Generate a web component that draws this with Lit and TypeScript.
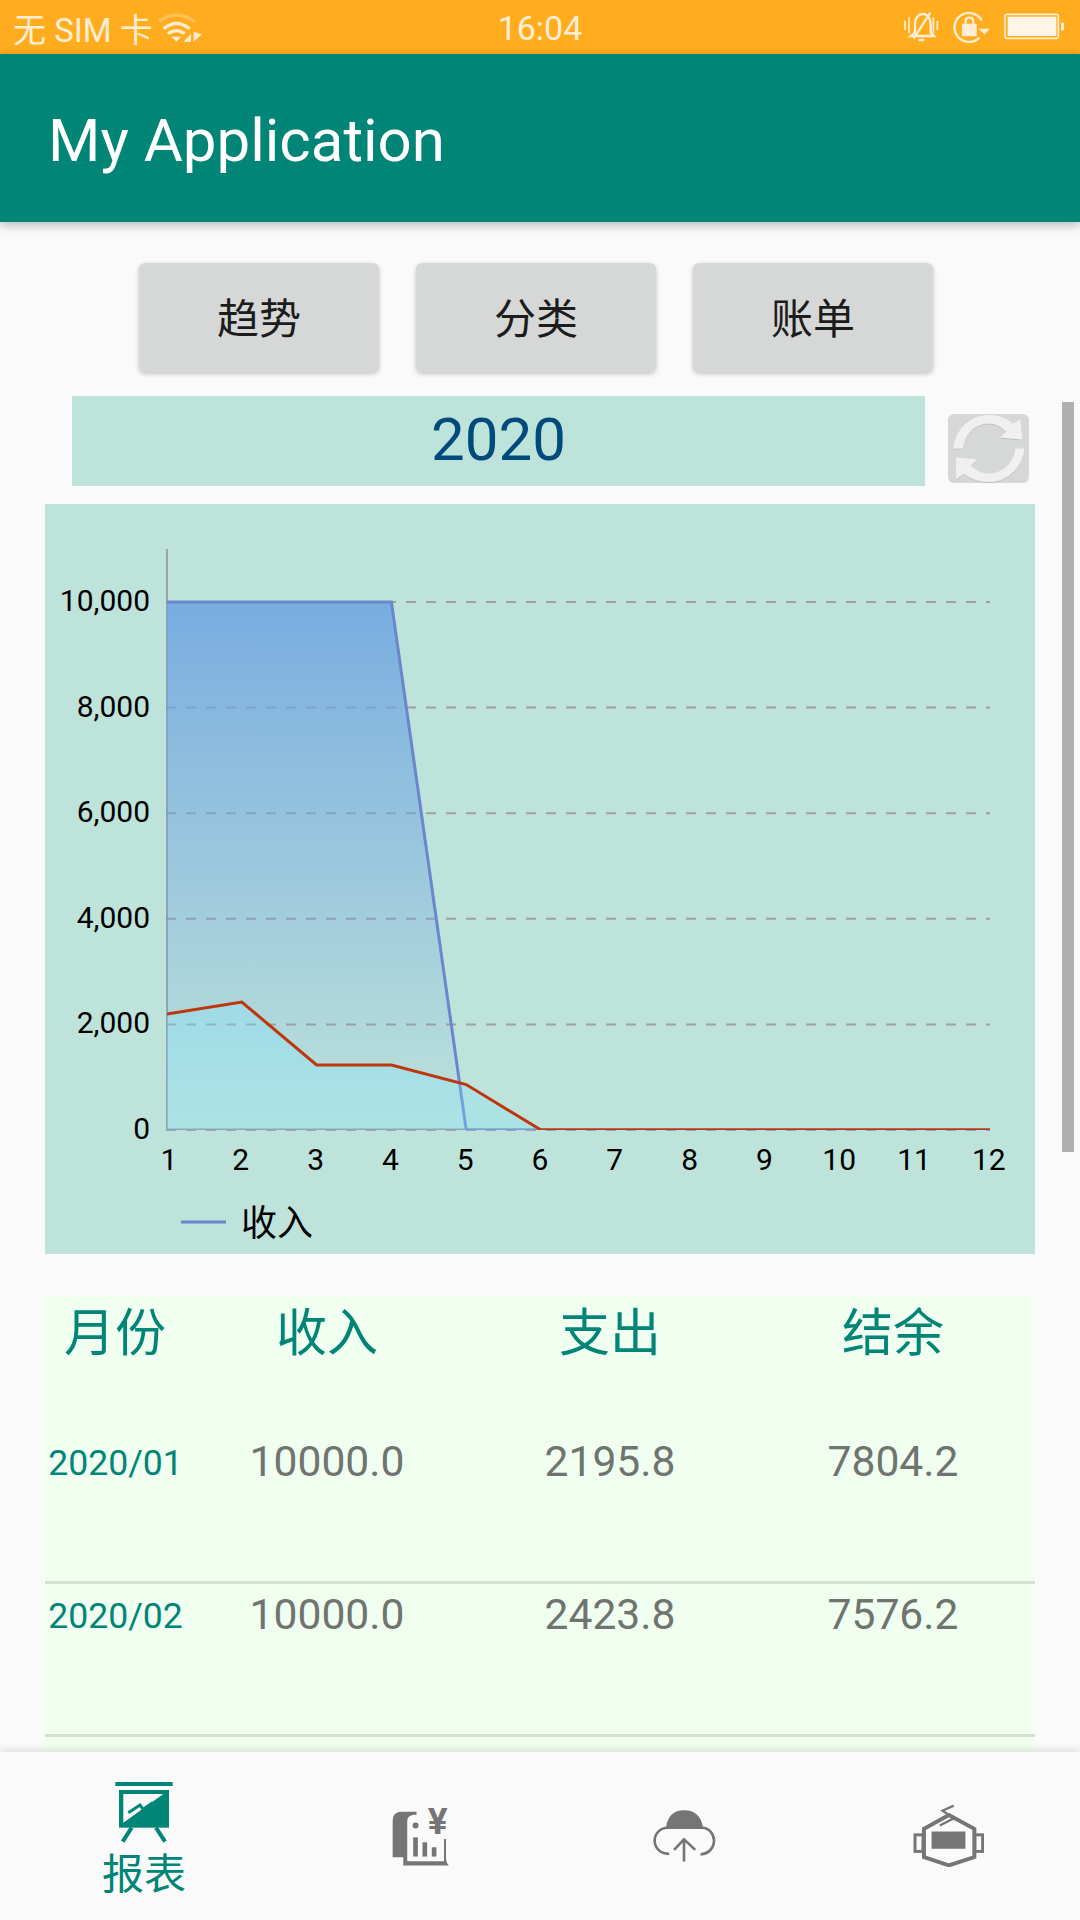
import { LitElement, html, svg, css } from 'lit';
import { customElement } from 'lit/decorators.js';

// one row of the report table
interface Row {
  month: string;
  income: string;
  spend: string;
  left: string;
}

const ROWS: Row[] = [
  { month: '2020/01', income: '10000.0', spend: '2195.8', left: '7804.2' },
  { month: '2020/02', income: '10000.0', spend: '2423.8', left: '7576.2' },
  { month: '2020/03', income: '10000.0', spend: '1231.0', left: '8769.0' },
];

const INCOME = [10000, 10000, 10000, 10000, 0, 0, 0, 0, 0, 0, 0, 0];
const SPEND = [2195.8, 2423.8, 1231, 1231, 860, 0, 0, 0, 0, 0, 0, 0];

// chart scale, the viewBox below uses page pixels
const xAt = (i: number) => 167 + i * 74.8;
const yAt = (v: number) => 1130 - v * 0.0528;
const points = (data: number[]) => data.map((v, i) => `${xAt(i)},${yAt(v)}`).join(' ');

@customElement('app-root')
export class AppRoot extends LitElement {
  static styles = css`
    :host {
      display: block;
      width: 1080px;
      height: 1920px;
      overflow: hidden;
      background: #fafafa;
      font-family: Roboto, 'Noto Sans CJK SC', sans-serif;
    }
    .page {
      display: flex;
      flex-direction: column;
      height: 1920px;
    }
    .status {
      position: relative;
      flex: none;
      height: 54px;
      display: flex;
      align-items: center;
      padding: 0 16px 0 13px;
      background: #ffad1f;
      color: #ffeed3;
      font-size: 33px;
    }
    .status-left {
      display: flex;
      align-items: center;
      gap: 5px;
      padding-top: 1px;
    }
    .status-right {
      margin-left: auto;
      display: flex;
      align-items: center;
      gap: 14px;
    }
    .clock {
      position: absolute;
      left: 0;
      right: 0;
      padding-top: 1px;
      text-align: center;
      font-size: 34px;
    }
    .status svg {
      display: block;
    }
    .appbar {
      position: relative;
      z-index: 2;
      flex: none;
      height: 168px;
      display: flex;
      align-items: center;
      padding: 5px 0 0 48px;
      box-sizing: border-box;
      background: #008577;
      color: #fff;
      font-size: 60px;
      box-shadow: 0 3px 10px rgba(0, 0, 0, 0.28);
    }
    .main {
      position: relative;
      flex: 1;
      min-height: 0;
      overflow: hidden;
    }
    .tabs {
      display: flex;
      gap: 37px;
      padding: 41px 0 0 139px;
    }
    .tab {
      width: 240px;
      height: 109px;
      box-sizing: border-box;
      padding-bottom: 4px;
      display: flex;
      align-items: center;
      justify-content: center;
      border-radius: 6px;
      background: #d6d7d7;
      color: #1c1c1c;
      font-size: 42px;
      box-shadow: 0 2px 5px rgba(0, 0, 0, 0.22);
    }
    .year-row {
      display: flex;
      align-items: flex-start;
      margin-top: 24px;
      padding-left: 72px;
    }
    .year {
      width: 853px;
      height: 90px;
      box-sizing: border-box;
      padding-bottom: 3px;
      display: flex;
      align-items: center;
      justify-content: center;
      background: #bee3da;
      color: #004b7c;
      font-size: 60px;
    }
    .refresh {
      display: block;
      margin: 18px 0 0 23px;
      border-radius: 6px;
      background: #d6d7d7;
    }
    .chart {
      display: block;
      margin: 18px 0 0 45px;
      background: #bee3da;
    }
    .chart text {
      font-family: Roboto, 'Noto Sans CJK SC', sans-serif;
      fill: #000;
    }
    .chart .tick {
      font-size: 30px;
    }
    .chart .legend {
      font-size: 36px;
    }
    .table {
      margin: 42px 0 0 45px;
      width: 990px;
      background: #f0fff0;
    }
    .row {
      display: grid;
      grid-template-columns: 138px 288px 278px 286px;
      height: 150px;
      text-align: center;
      border-bottom: 3px solid #d2e3d4;
      color: #6f746f;
      font-size: 42.6px;
      line-height: 42px;
    }
    .row > div {
      padding-top: 9px;
    }
    .row > div:last-child {
      padding-left: 2px;
    }
    .row .month {
      padding: 14px 0 0 3px;
      color: #008577;
      font-size: 35.6px;
      line-height: 36px;
    }
    .row.head {
      height: 135px;
      border-bottom: none;
      color: #008577;
      font-size: 51px;
      line-height: 75px;
    }
    .row.head > div {
      padding-top: 0;
    }
    .row.head > div:first-child {
      padding-left: 2px;
    }
    .scrollbar {
      position: absolute;
      left: 1062px;
      top: 180px;
      width: 12px;
      height: 750px;
      background: #b0b0b0;
    }
    .nav {
      position: relative;
      z-index: 2;
      flex: none;
      height: 168px;
      display: flex;
      background: #fafafa;
      box-shadow: 0 -2px 8px rgba(0, 0, 0, 0.12);
    }
    .nav-item {
      width: 264px;
      display: flex;
      flex-direction: column;
      align-items: center;
      justify-content: center;
      color: #757575;
    }
    .nav-item.active {
      width: 288px;
      justify-content: flex-start;
      padding-top: 28px;
      color: #008577;
    }
    .nav-item svg {
      display: block;
    }
    .nav-label {
      margin-top: 5px;
      font-size: 42px;
      line-height: 50px;
    }
  `;

  // status bar icons, paths follow the zoomed reference
  renderWifi() {
    return html`<svg width="45" height="30" viewBox="475 36 135 90" fill="none" stroke="currentColor" stroke-width="10">
      <path d="M478 62Q530 22 585 62" opacity="0.3" />
      <path d="M492 83Q530 52 570 83" />
      <path d="M505 98Q530 80 555 98" />
      <path d="M515 107H545L530 122Z" fill="currentColor" stroke="none" />
      <path d="M552 122H574V98Z" fill="currentColor" stroke="none" />
      <path d="M582 92V122L606 100Z" fill="currentColor" stroke="none" />
    </svg>`;
  }

  renderBell() {
    return html`<svg width="35" height="30" viewBox="135 36 105 90" fill="none" stroke="currentColor" stroke-width="7">
      <path d="M138 62V90M150 52V100M223 52V100M235 62V90" stroke-width="5" />
      <path d="M168 98V72C168 52 180 42 192 42C205 42 215 55 215 72V98L225 108H155Z" />
      <path d="M214 38L164 116M178 120H196" />
    </svg>`;
  }

  renderRotationLock() {
    return html`<svg width="37" height="32" viewBox="275 30 112 96" fill="none" stroke="currentColor" stroke-width="7">
      <path d="M362 58A44 44 0 1 0 355 110" />
      <path d="M353 83H386L370 101Z" fill="currentColor" stroke="none" />
      <rect x="302" y="68" width="45" height="38" rx="3" fill="currentColor" stroke="none" />
      <path d="M313 68V60C313 46 336 46 336 60V68" />
    </svg>`;
  }

  renderBattery() {
    return html`<svg width="60" height="28" viewBox="432 41 180 84" fill="none">
      <rect x="435" y="45" width="160" height="72" rx="6" stroke="currentColor" stroke-width="5" />
      <rect x="443" y="52" width="146" height="58" fill="#fff5e6" />
      <rect x="603" y="70" width="9" height="23" fill="currentColor" />
    </svg>`;
  }

  renderRefresh() {
    return html`<svg class="refresh" width="81" height="69" viewBox="144 102 242 206">
      <defs>
        <filter id="soft" x="-10%" y="-10%" width="120%" height="120%">
          <feDropShadow dx="0" dy="3" stdDeviation="2" flood-color="#000" flood-opacity="0.12" />
        </filter>
      </defs>
      <g fill="#f0f0f0" filter="url(#soft)">
        <path d="M160 205C165 150 210 105 265 105C295 105 320 115 338 130L360 118L366 178L300 172L318 155C305 140 285 130 265 130C225 130 195 160 188 205Z" />
        <path d="M372 205C368 262 320 305 265 305C235 305 210 295 192 280L168 297V232L232 238L212 256C225 270 245 280 265 280C305 280 340 250 345 205Z" />
      </g>
    </svg>`;
  }

  renderChart() {
    const grid = [0, 2000, 4000, 6000, 8000, 10000];
    const incomeArea = `${xAt(0)},${yAt(0)} ${points(INCOME.slice(0, 5))}`;
    const spendArea = `${xAt(0)},${yAt(0)} ${points(SPEND.slice(0, 6))}`;
    return html`<svg class="chart" width="990" height="750" viewBox="45 504 990 750">
      <defs>
        <linearGradient id="incomeFill" gradientUnits="userSpaceOnUse" x1="0" y1="602" x2="0" y2="1130">
          <stop offset="0" stop-color="rgb(108,163,225)" stop-opacity="0.85" />
          <stop offset="1" stop-color="rgb(108,163,225)" stop-opacity="0" />
        </linearGradient>
        <!-- series are cut off at the zero line, like the reference -->
        <clipPath id="plot"><rect x="167" y="540" width="830" height="590" /></clipPath>
      </defs>
      ${grid.map(
        (v) => svg`<line x1="166" x2="990" y1=${yAt(v)} y2=${yAt(v)} stroke="#a0a0a0" stroke-width="2" stroke-dasharray="10 10" />
          <text class="tick" x="150" y=${yAt(v) + 9} text-anchor="end">${v.toLocaleString('en-US')}</text>`
      )}
      ${INCOME.map(
        // first label sits a little to the right of its tick in the reference
        (_, i) => svg`<text class="tick" x=${i === 0 ? 169 : xAt(i) - 1} y="1170" text-anchor="middle">${i + 1}</text>`
      )}
      <line x1="167" x2="167" y1="549" y2="1130" stroke="#8a8f9c" stroke-width="1.5" />
      <line x1="167" x2="990" y1="1129.3" y2="1129.3" stroke="#8a8f9c" stroke-width="1.5" />
      <g clip-path="url(#plot)">
        <polygon points=${incomeArea} fill="url(#incomeFill)" />
        <polyline points=${points(INCOME)} fill="none" stroke="#6a86cc" stroke-width="3" />
        <polygon points=${spendArea} fill="rgb(130,230,255)" fill-opacity="0.3" />
        <polyline points=${points(SPEND)} fill="none" stroke="#c0360c" stroke-width="3" />
      </g>
      <line x1="181" x2="226" y1="1222" y2="1222" stroke="#6a86cc" stroke-width="3" />
      <text class="legend" x="241" y="1236">收入</text>
    </svg>`;
  }

  renderReportIcon() {
    return html`<svg width="64" height="65" viewBox="96 120 192 195">
      <rect x="106" y="126" width="172" height="12" fill="currentColor" />
      <rect x="117" y="150" width="150" height="113" fill="currentColor" />
      <path d="M130 162H250L130 248Z" fill="#fafafa" />
      <path d="M145 218L180 195L190 208L218 188" fill="none" stroke="currentColor" stroke-width="9" />
      <path d="M155 263L128 305M228 263L255 305" fill="none" stroke="currentColor" stroke-width="12" />
    </svg>`;
  }

  renderBillIcon() {
    return html`<svg width="57" height="59" viewBox="936 199 172 177" fill="currentColor">
      <path d="M938 240Q938 213 965 213H1010V222Q982 222 982 240V362H1093V295H1099V350Q1099 368 1108 375H970V350H938Z" />
      <circle cx="1007" cy="254" r="9" />
      <rect x="1000" y="290" width="14" height="58" />
      <rect x="1028" y="305" width="14" height="43" />
      <rect x="1056" y="320" width="14" height="28" />
      <text x="1074" y="280" text-anchor="middle" font-size="112" font-weight="700" font-family="Roboto, sans-serif">¥</text>
    </svg>`;
  }

  renderCloudIcon() {
    return html`<svg width="63" height="52" viewBox="96 148 191 156" fill="none" stroke="currentColor" stroke-width="8">
      <path d="M135 202Q142 148 190 148Q240 148 248 202Z" fill="currentColor" stroke="none" />
      <path d="M145 280C115 280 101 260 101 240C101 217 120 201 140 201H245C265 201 281 220 281 240C281 262 265 280 240 282" />
      <path d="M190 303V236M160 268L190 236L224 268" />
    </svg>`;
  }

  renderRobotIcon() {
    return html`<svg width="71" height="62" viewBox="878 128 212 187" fill="none" stroke="currentColor" stroke-width="12">
      <path d="M1000 130L966 145L1000 168L958 190" stroke-width="7" />
      <path d="M985 158L1062 200V285L985 310L910 285V200Z" />
      <rect x="883" y="218" width="24" height="50" stroke-width="9" />
      <rect x="1063" y="218" width="24" height="50" stroke-width="9" />
      <rect x="933" y="208" width="102" height="52" fill="currentColor" stroke="none" />
    </svg>`;
  }

  render() {
    return html`
      <div class="page">
        <div class="status">
          <div class="status-left"><span>无 SIM 卡</span>${this.renderWifi()}</div>
          <div class="clock">16:04</div>
          <div class="status-right">${this.renderBell()}${this.renderRotationLock()}${this.renderBattery()}</div>
        </div>
        <div class="appbar">My Application</div>
        <div class="main">
          <div class="tabs">
            <div class="tab">趋势</div>
            <div class="tab">分类</div>
            <div class="tab">账单</div>
          </div>
          <div class="year-row">
            <div class="year">2020</div>
            ${this.renderRefresh()}
          </div>
          ${this.renderChart()}
          <div class="table">
            <div class="row head">
              <div>月份</div>
              <div>收入</div>
              <div>支出</div>
              <div>结余</div>
            </div>
            ${ROWS.map(
              (r) => html`<div class="row">
                <div class="month">${r.month}</div>
                <div>${r.income}</div>
                <div>${r.spend}</div>
                <div>${r.left}</div>
              </div>`
            )}
          </div>
          <div class="scrollbar"></div>
        </div>
        <div class="nav">
          <div class="nav-item active">
            ${this.renderReportIcon()}
            <div class="nav-label">报表</div>
          </div>
          <div class="nav-item">${this.renderBillIcon()}</div>
          <div class="nav-item">${this.renderCloudIcon()}</div>
          <div class="nav-item">${this.renderRobotIcon()}</div>
        </div>
      </div>
    `;
  }
}
